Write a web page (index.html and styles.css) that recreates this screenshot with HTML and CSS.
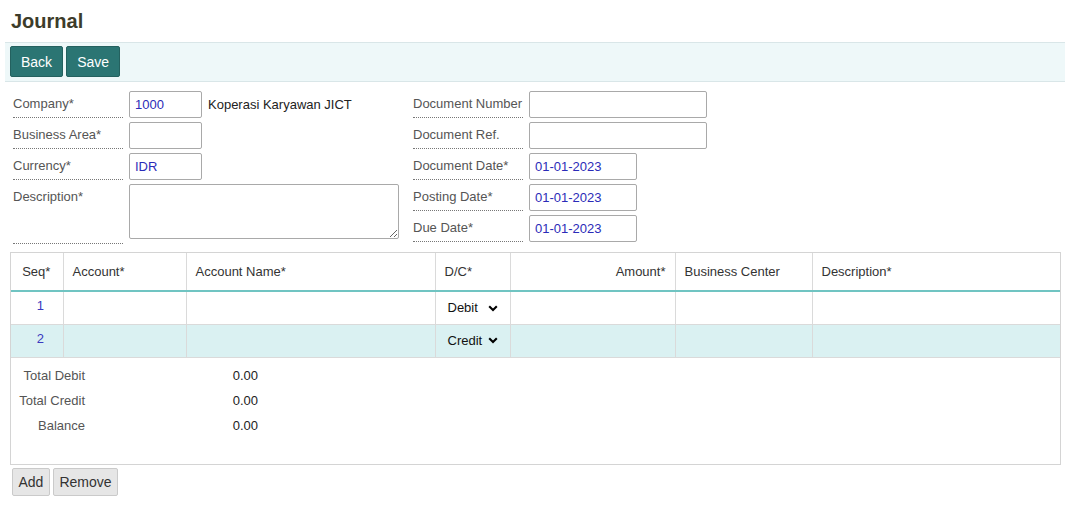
FILE: index.html
```html
<!DOCTYPE html>
<html>
<head>
<meta charset="utf-8">
<link rel="stylesheet" href="styles.css">
</head>
<body>
<div class="page">
  <h1 class="title">Journal</h1>
  <div class="toolbar">
    <button class="btn">Back</button>
    <button class="btn">Save</button>
  </div>
  <div class="form">
    <div class="col">
      <div class="row"><div class="lbl">Company*</div><input class="inp w-code" value="1000"><span class="hint">Koperasi Karyawan JICT</span></div>
      <div class="row"><div class="lbl">Business Area*</div><input class="inp w-code" value=""></div>
      <div class="row"><div class="lbl">Currency*</div><input class="inp w-code" value="IDR"></div>
      <div class="row row-tall"><div class="lbl lbl-tall">Description*</div><textarea class="area"></textarea></div>
    </div>
    <div class="col">
      <div class="row"><div class="lbl">Document Number</div><input class="inp w-long" value=""></div>
      <div class="row"><div class="lbl">Document Ref.</div><input class="inp w-long" value=""></div>
      <div class="row"><div class="lbl">Document Date*</div><input class="inp w-date" value="01-01-2023"></div>
      <div class="row"><div class="lbl">Posting Date*</div><input class="inp w-date" value="01-01-2023"></div>
      <div class="row"><div class="lbl">Due Date*</div><input class="inp w-date" value="01-01-2023"></div>
    </div>
  </div>

  <div class="grid">
    <table class="tbl">
      <colgroup>
        <col class="c-seq"><col class="c-acc"><col class="c-name"><col class="c-dc"><col class="c-amt"><col class="c-bc"><col>
      </colgroup>
      <thead>
        <tr>
          <th class="center">Seq*</th>
          <th>Account*</th>
          <th>Account Name*</th>
          <th>D/C*</th>
          <th class="right">Amount*</th>
          <th>Business Center</th>
          <th class="last">Description*</th>
        </tr>
      </thead>
      <tbody>
        <tr>
          <td class="center seq">1</td><td></td><td></td>
          <td><span class="sel"><span class="sel-text">Debit</span><svg class="chev" width="10" height="7" viewBox="0 0 10 7"><path d="M1.2 1.3 L5 5 L8.8 1.3" fill="none" stroke="#000" stroke-width="2.1"/></svg></span></td>
          <td></td><td></td><td class="last"></td>
        </tr>
        <tr class="alt">
          <td class="center seq">2</td><td></td><td></td>
          <td><span class="sel"><span class="sel-text">Credit</span><svg class="chev" width="10" height="7" viewBox="0 0 10 7"><path d="M1.2 1.3 L5 5 L8.8 1.3" fill="none" stroke="#000" stroke-width="2.1"/></svg></span></td>
          <td></td><td></td><td class="last"></td>
        </tr>
      </tbody>
    </table>
    <div class="totals">
      <div class="trow"><span class="tlbl">Total Debit</span><span class="tval">0.00</span></div>
      <div class="trow"><span class="tlbl">Total Credit</span><span class="tval">0.00</span></div>
      <div class="trow"><span class="tlbl">Balance</span><span class="tval">0.00</span></div>
    </div>
  </div>

  <div class="actions">
    <button class="btn-light">Add</button>
    <button class="btn-light">Remove</button>
  </div>
</div>
</body>
</html>
```

FILE: styles.css
```css
* { box-sizing: border-box; }
html, body { margin: 0; padding: 0; background: #fff; }
body { font-family: "Liberation Sans", Arial, sans-serif; font-size: 13px; color: #333; }

.page { padding-top: 10px; }

.title {
  margin: 0 0 9px 11px;
  font-size: 20px;
  line-height: 23px;
  font-weight: bold;
  color: #3d3c2a;
}

.toolbar {
  margin-left: 5px;
  height: 40px;
  padding: 3px 0 4px 5px;
  background: #eef8f9;
  border-top: 1px solid #d9e6e8;
  border-bottom: 1px solid #d9e6e8;
  display: flex;
  gap: 3px;
}

.btn {
  height: 31px;
  padding: 0 10px;
  border: 1px solid #24615f;
  border-radius: 2px;
  background: #2b7573;
  color: #fff;
  font-family: "Liberation Sans", Arial, sans-serif;
  font-size: 14px;
}

.form {
  display: flex;
  padding: 9px 0 0 13px;
}

.col {
  width: 400px;
  display: flex;
  flex-direction: column;
  gap: 4px;
}

.row {
  display: flex;
  align-items: flex-start;
}

.lbl {
  width: 110px;
  height: 27px;
  margin-right: 6px;
  padding-top: 5px;
  line-height: 15px;
  color: #555;
  border-bottom: 1px dotted #777;
}

.lbl-tall { height: 60px; }

.inp {
  height: 27px;
  padding: 0 5px;
  border: 1px solid #a9a9a9;
  border-radius: 2px;
  font-family: "Liberation Sans", Arial, sans-serif;
  font-size: 13px;
  color: #2b2bb8;
  background: #fff;
  outline: none;
}

.w-code { width: 73px; }
.w-long { width: 178px; }
.w-date { width: 108px; }

.hint {
  margin-left: 6px;
  line-height: 27px;
  color: #222;
}

.area {
  width: 270px;
  height: 55px;
  border: 1px solid #a9a9a9;
  border-radius: 2px;
  font-family: "Liberation Sans", Arial, sans-serif;
  font-size: 13px;
  resize: both;
}

.grid {
  margin: 8px 4px 0 10px;
  border: 1px solid #d4d4d4;
  height: 213px;
}

.tbl {
  width: 100%;
  border-collapse: collapse;
  table-layout: fixed;
}

.c-seq { width: 52px; }
.c-acc { width: 123px; }
.c-name { width: 249px; }
.c-dc { width: 75px; }
.c-amt { width: 165px; }
.c-bc { width: 137px; }

.tbl th {
  height: 38px;
  padding: 0 9px;
  text-align: left;
  font-weight: normal;
  color: #333;
  border-right: 1px solid #dadada;
  border-bottom: 2px solid #70c4c2;
}

.tbl td {
  height: 33px;
  padding: 8px 9px 0 9px;
  vertical-align: top;
  border-right: 1px solid #dadada;
  border-bottom: 1px solid #dadada;
}

.tbl .last { border-right: none; }
.tbl th.center { text-align: center; padding: 0 1px 0 0; }
.tbl .right { text-align: right; }
.tbl td.seq { text-align: center; color: #3a3ac0; padding: 6px 0 0 7px; }

.alt td { background: #daf1f2; }

.sel {
  display: inline-flex;
  align-items: center;
  margin-left: 3px;
  color: #111;
}
.sel-text { width: 40px; }
.chev { display: block; margin-top: 1px; }

.totals {
  padding: 5px 0 0 0;
}

.trow {
  display: flex;
  height: 25px;
  line-height: 25px;
}

.tlbl {
  width: 74px;
  text-align: right;
  color: #555;
}

.tval {
  width: 173px;
  text-align: right;
  color: #222;
}

.actions {
  display: flex;
  gap: 3px;
  margin: 3px 0 0 12px;
}

.btn-light {
  height: 28px;
  padding: 0 5.5px;
  border: 1px solid #cacaca;
  border-radius: 2px;
  background: #e6e6e6;
  color: #333;
  font-family: "Liberation Sans", Arial, sans-serif;
  font-size: 14px;
}
```
